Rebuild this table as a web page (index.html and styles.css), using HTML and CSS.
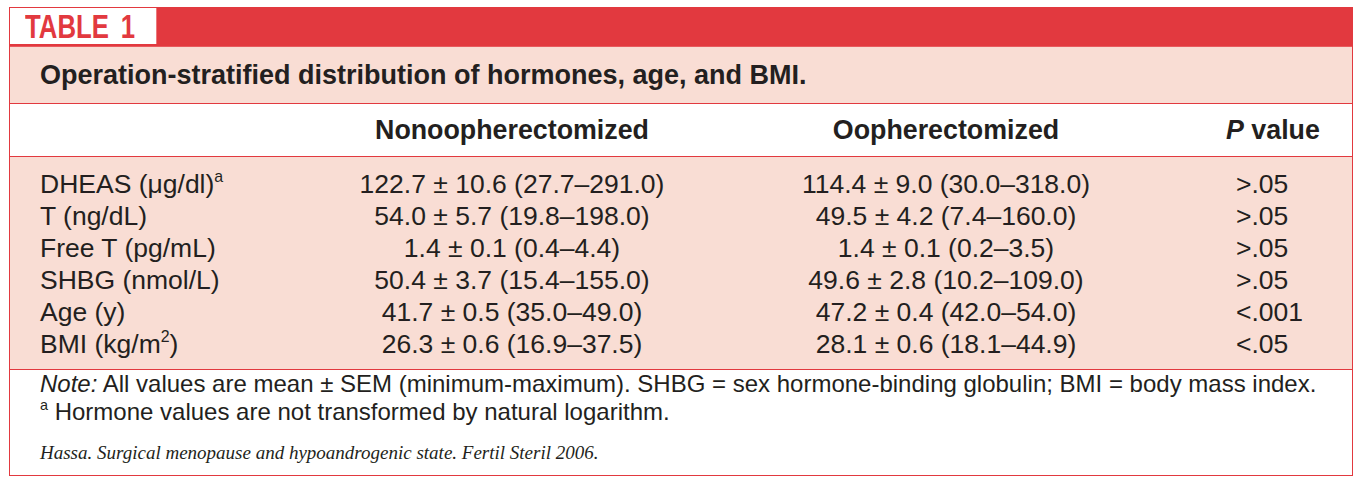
FILE: index.html
```html
<!DOCTYPE html>
<html>
<head>
<meta charset="utf-8">
<link rel="stylesheet" href="styles.css">
</head>
<body>
<div class="table-box">
  <div class="banner">
    <div class="tag"><span class="tag-text">TABLE 1</span></div>
  </div>
  <div class="title">Operation-stratified distribution of hormones, age, and BMI.</div>
  <div class="head grid">
    <div></div>
    <div class="c2">Nonoopherectomized</div>
    <div class="c3">Oopherectomized</div>
    <div class="c4h"><i>P</i> value</div>
  </div>
  <div class="body grid">
    <div class="c1">DHEAS (<span class="mu">μ</span>g/dl)<sup>a</sup></div><div class="c2">122.7 ± 10.6 (27.7–291.0)</div><div class="c3">114.4 ± 9.0 (30.0–318.0)</div><div class="c4">&gt;.05</div>
    <div class="c1">T (ng/dL)</div><div class="c2">54.0 ± 5.7 (19.8–198.0)</div><div class="c3">49.5 ± 4.2 (7.4–160.0)</div><div class="c4">&gt;.05</div>
    <div class="c1">Free T (pg/mL)</div><div class="c2">1.4 ± 0.1 (0.4–4.4)</div><div class="c3">1.4 ± 0.1 (0.2–3.5)</div><div class="c4">&gt;.05</div>
    <div class="c1">SHBG (nmol/L)</div><div class="c2">50.4 ± 3.7 (15.4–155.0)</div><div class="c3">49.6 ± 2.8 (10.2–109.0)</div><div class="c4">&gt;.05</div>
    <div class="c1">Age (y)</div><div class="c2">41.7 ± 0.5 (35.0–49.0)</div><div class="c3">47.2 ± 0.4 (42.0–54.0)</div><div class="c4">&lt;.001</div>
    <div class="c1">BMI (kg/m<sup>2</sup>)</div><div class="c2">26.3 ± 0.6 (16.9–37.5)</div><div class="c3">28.1 ± 0.6 (18.1–44.9)</div><div class="c4">&lt;.05</div>
  </div>
  <div class="notes">
    <p class="note"><i>Note:</i> All values are mean ± SEM (minimum-maximum). SHBG = sex hormone-binding globulin; BMI = body mass index.</p>
    <p class="note"><sup>a</sup> Hormone values are not transformed by natural logarithm.</p>
    <p class="cite">Hassa. Surgical menopause and hypoandrogenic state. Fertil Steril 2006.</p>
  </div>
</div>
</body>
</html>
```

FILE: styles.css
```css
html, body { margin: 0; padding: 0; background: #ffffff; }
body { padding: 7px 0 0 9px; }

.table-box {
  width: 1342px;
  border: 1px solid #e2393f;
  border-top: 0;
  font-family: "Liberation Sans", Arial, sans-serif;
  color: #231f20;
}

.banner {
  height: 38px;
  background: #e2393f;
  padding: 1px 0 0 0;
  border-bottom: 1px solid #e85a5e;
}
.tag {
  width: 146px;
  height: 36px;
  background: #ffffff;
  border-right: 1px solid #ec7a7c;
  overflow: hidden;
  white-space: nowrap;
}
.tag-text {
  display: inline-block;
  white-space: nowrap;
  font-weight: bold;
  font-size: 33px;
  line-height: 37px;
  color: #e2393f;
  transform: scaleX(0.78);
  transform-origin: left center;
  margin-left: 15px;
  word-spacing: 6px;
}

.title {
  background: #f9ddd4;
  height: 56px;
  line-height: 56px;
  padding-left: 30px;
  font-weight: bold;
  font-size: 27px;
  white-space: nowrap;
  border-bottom: 1px solid #e2393f;
}

.grid {
  display: grid;
  grid-template-columns: 330px 344px 524px 1fr;
}

.head {
  height: 52px;
  align-items: center;
  font-weight: bold;
  font-size: 26.8px;
  border-bottom: 1px solid #e2393f;
}
.head .c2, .head .c3 { text-align: center; white-space: nowrap; }
.c4h { padding-left: 18px; white-space: nowrap; }

.body {
  background: #f9ddd4;
  padding: 11px 0 9px 0;
  font-size: 26.5px;
  line-height: 32px;
  border-bottom: 1px solid #e2393f;
}
.c1 { padding-left: 30px; white-space: nowrap; }
.body .c2, .body .c3 { text-align: center; white-space: nowrap; }
.c4 { padding-left: 28px; white-space: nowrap; }

sup { font-size: 0.6em; line-height: 0; vertical-align: 0.7em; }

.notes { padding: 0 0 11px 30px; }
.note { margin: 0; font-size: 24px; line-height: 28px; height: 28px; white-space: nowrap; }
.cite {
  margin: 16px 0 0 0;
  font-family: "Liberation Serif", "Times New Roman", serif;
  font-style: italic;
  font-size: 19px;
  line-height: 22px;
  white-space: nowrap;
}
```
